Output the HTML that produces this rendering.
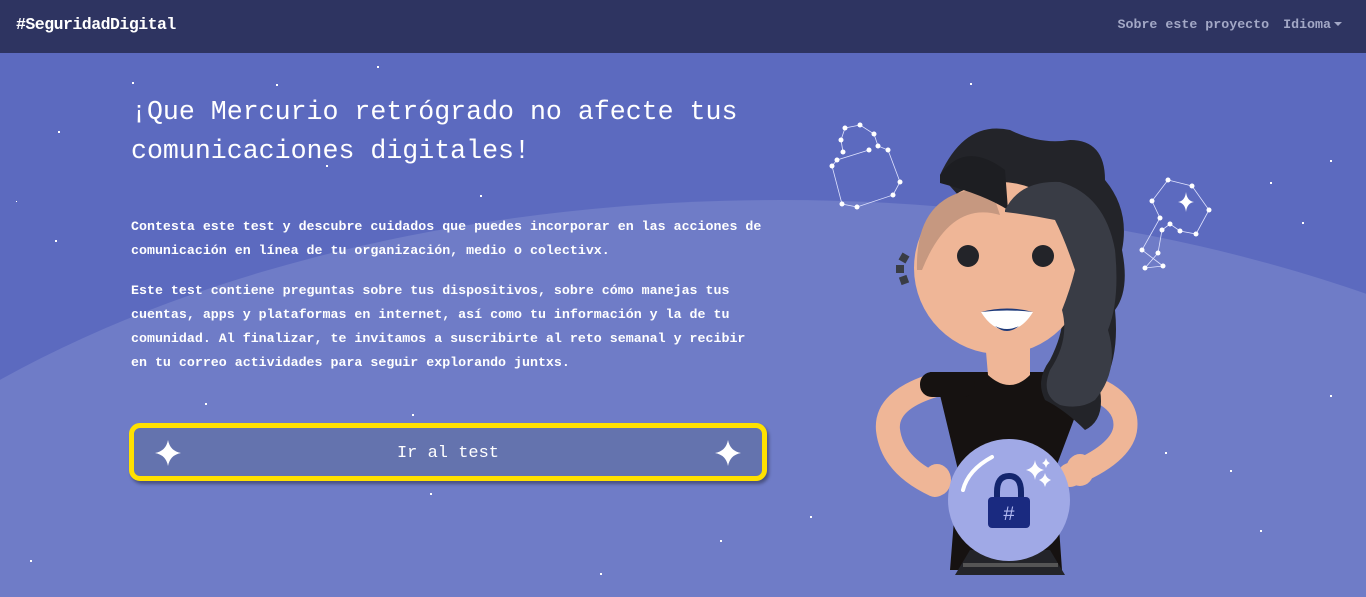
<!DOCTYPE html>
<html><head><meta charset="utf-8"><style>
*{margin:0;padding:0;box-sizing:border-box}
html{width:1366px;height:597px;overflow:hidden}
body{width:1366px;height:597px;overflow:hidden;background:#5c6abf;font-family:"Liberation Mono",monospace;position:relative;color:#fff}
.bg{position:absolute;left:0;top:0;width:1366px;height:597px;overflow:hidden}
.arc{position:absolute;left:-320px;top:200px;width:2200px;height:1220px;border-radius:50%;background:#6f7cc7}
nav{position:absolute;left:0;top:0;width:1366px;height:53px;background:#2e3461;z-index:2}
.brand{position:absolute;left:16px;top:15px;font-size:16.5px;font-weight:bold;letter-spacing:-0.5px}
.links{position:absolute;right:24px;top:17px;font-size:13.3px;color:#a3a8c6;font-weight:bold}
.links span{margin-left:14px}
.car{display:inline-block;border-left:4px solid transparent;border-right:4px solid transparent;border-top:4px solid #a3a8c6;vertical-align:middle;margin-left:3px}
h1{position:absolute;left:131px;top:93px;font-size:26.6px;font-weight:normal;line-height:39px;z-index:1}
.p{position:absolute;left:131px;font-size:13.3px;font-weight:bold;line-height:24px;z-index:1}
.btn{position:absolute;left:129px;top:423px;width:638px;height:58px;border:5px solid #ffe100;border-radius:11px;background:#6473ae;box-shadow:2px 3px 3px rgba(0,0,0,.35);z-index:1;text-align:center;font-size:17px;line-height:52px}
.btn svg{position:absolute;top:12px}
.s{position:absolute;background:#fff;z-index:1}
</style></head><body>
<div class="bg"><div class="arc"></div></div>
<nav><div class="brand">#SeguridadDigital</div><div class="links"><span>Sobre este proyecto</span><span>Idioma<i class="car"></i></span></div></nav>
<h1>¡Que Mercurio retrógrado no afecte tus<br>comunicaciones digitales!</h1>
<div class="p" style="top:215px">Contesta este test y descubre cuidados que puedes incorporar en las acciones de<br>comunicación en línea de tu organización, medio o colectivx.</div>
<div class="p" style="top:279px">Este test contiene preguntas sobre tus dispositivos, sobre cómo manejas tus<br>cuentas, apps y plataformas en internet, así como tu información y la de tu<br>comunidad. Al finalizar, te invitamos a suscribirte al reto semanal y recibir<br>en tu correo actividades para seguir explorando juntxs.</div>
<div class="btn">Ir al test
<svg style="left:21px" width="26" height="26" viewBox="0 0 26 26"><path d="M13 0Q15 11 26 13Q15 15 13 26Q11 15 0 13Q11 11 13 0Z" fill="#fff"/></svg>
<svg style="right:21px" width="26" height="26" viewBox="0 0 26 26"><path d="M13 0Q15 11 26 13Q15 15 13 26Q11 15 0 13Q11 11 13 0Z" fill="#fff"/></svg>
</div>
<div class="s" style="left:132px;top:82px;width:2px;height:2px"></div>
<div class="s" style="left:58px;top:131px;width:2px;height:2px"></div>
<div class="s" style="left:377px;top:66px;width:2px;height:2px"></div>
<div class="s" style="left:276px;top:84px;width:2px;height:2px"></div>
<div class="s" style="left:55px;top:240px;width:2px;height:2px"></div>
<div class="s" style="left:326px;top:165px;width:2px;height:2px"></div>
<div class="s" style="left:16px;top:201px;width:1px;height:1px"></div>
<div class="s" style="left:205px;top:403px;width:2px;height:2px"></div>
<div class="s" style="left:412px;top:414px;width:2px;height:2px"></div>
<div class="s" style="left:430px;top:493px;width:2px;height:2px"></div>
<div class="s" style="left:600px;top:573px;width:2px;height:2px"></div>
<div class="s" style="left:810px;top:516px;width:2px;height:2px"></div>
<div class="s" style="left:1270px;top:182px;width:2px;height:2px"></div>
<div class="s" style="left:1302px;top:222px;width:2px;height:2px"></div>
<div class="s" style="left:1330px;top:160px;width:2px;height:2px"></div>
<div class="s" style="left:1230px;top:470px;width:2px;height:2px"></div>
<div class="s" style="left:1260px;top:530px;width:2px;height:2px"></div>
<div class="s" style="left:1165px;top:452px;width:2px;height:2px"></div>
<div class="s" style="left:1330px;top:395px;width:2px;height:2px"></div>
<div class="s" style="left:30px;top:560px;width:2px;height:2px"></div>
<div class="s" style="left:720px;top:540px;width:2px;height:2px"></div>
<div class="s" style="left:480px;top:195px;width:2px;height:2px"></div>
<div class="s" style="left:970px;top:83px;width:2px;height:2px"></div>
<svg style="position:absolute;left:800px;top:100px;z-index:1" width="450" height="490" viewBox="0 0 450 490">
<g stroke="#dfe3ff" stroke-width="0.8" fill="none">
<polyline points="45,28 60,25 74,34 78,46 88,50 100,82 93,95 57,107 42,104 32,66 37,60 69,50"/>
<polyline points="45,28 41,40 43,52"/>
<polyline points="368,80 392,86 409,110 396,134 380,131 370,124 362,130 358,153 345,168 363,166 342,150 360,118 352,101 368,80"/>
</g>
<g fill="#fff">
<circle cx="45" cy="28" r="2.5"/><circle cx="60" cy="25" r="2.5"/><circle cx="74" cy="34" r="2.5"/><circle cx="78" cy="46" r="2.5"/><circle cx="88" cy="50" r="2.5"/><circle cx="100" cy="82" r="2.5"/><circle cx="93" cy="95" r="2.5"/><circle cx="57" cy="107" r="2.5"/><circle cx="42" cy="104" r="2.5"/><circle cx="32" cy="66" r="2.5"/><circle cx="37" cy="60" r="2.5"/><circle cx="69" cy="50" r="2.5"/><circle cx="41" cy="40" r="2.5"/><circle cx="43" cy="52" r="2.5"/>
<circle cx="368" cy="80" r="2.5"/><circle cx="392" cy="86" r="2.5"/><circle cx="409" cy="110" r="2.5"/><circle cx="396" cy="134" r="2.5"/><circle cx="380" cy="131" r="2.5"/><circle cx="370" cy="124" r="2.5"/><circle cx="362" cy="130" r="2.5"/><circle cx="358" cy="153" r="2.5"/><circle cx="345" cy="168" r="2.5"/><circle cx="363" cy="166" r="2.5"/><circle cx="342" cy="150" r="2.5"/><circle cx="360" cy="118" r="2.5"/><circle cx="352" cy="101" r="2.5"/>
<path d="M386 92Q387 101 394 102Q387 103 386 112Q385 103 378 102Q385 101 386 92Z"/>
</g>
<path d="M135 285Q85 300 88 330Q92 365 135 385" stroke="#efb697" stroke-width="24" fill="none" stroke-linecap="round"/>
<path d="M285 285Q330 300 325 330Q320 355 270 375" stroke="#efb697" stroke-width="24" fill="none" stroke-linecap="round"/>
<path d="M130 272L270 272L285 290L255 370L262 470L150 470L158 370L140 295Z" fill="#161211"/>
<rect x="120" y="272" width="55" height="25" rx="12" fill="#161211"/>
<path d="M185 240L230 240L230 275Q210 295 188 275Z" fill="#efb697"/>
<path d="M140 75Q165 20 210 30Q240 45 270 40Q305 40 305 80Q330 110 322 150Q330 190 315 210Q320 260 300 290Q305 320 285 330Q265 310 245 300Q235 280 250 260Q265 230 262 210Z" fill="#232429"/>
<circle cx="200" cy="168" r="86" fill="#efb697"/>
<path d="M117 170Q115 100 170 90L190 85L200 115Q150 100 122 170Z" fill="#c69880"/>
<path d="M140 75Q165 40 205 70L208 110Q185 95 140 83Z" fill="#1d1e22"/>
<path d="M205 110Q220 80 260 82Q305 95 315 150Q320 200 308 230Q320 270 295 300Q280 310 260 305Q240 295 250 270Q270 240 262 210Q270 190 275 170Q265 140 255 120Q230 115 205 112Z" fill="#393c45"/>
<rect x="100" y="154" width="8" height="8" fill="#393c45" transform="rotate(30 104 158)"/>
<rect x="96" y="165" width="8" height="8" fill="#393c45"/>
<rect x="100" y="176" width="8" height="8" fill="#393c45" transform="rotate(-20 104 180)"/>
<circle cx="168" cy="156" r="11" fill="#232429"/><circle cx="243" cy="156" r="11" fill="#232429"/>
<path d="M181 212Q207 207 233 212Q222 230 207 230Q192 230 181 212Z" fill="#fff"/>
<path d="M181 212Q207 205 233 212Q207 209 181 212Z" fill="#1e3a7a"/>
<path d="M195 226Q207 232 219 226Q207 236 195 226Z" fill="#1e3a7a"/>
<ellipse cx="137" cy="380" rx="14" ry="16" fill="#efb697"/>
<ellipse cx="280" cy="370" rx="14" ry="16" fill="#efb697"/>
<path d="M170 450L250 450L265 475L155 475Z" fill="#232429"/>
<rect x="163" y="463" width="95" height="4" fill="#555"/>
<circle cx="209" cy="400" r="61" fill="#a0a9e6"/>
<path d="M163 390Q168 370 192 357" stroke="#fff" stroke-width="4" fill="none" stroke-linecap="round"/>
<path d="M197 398V392Q197 376 209 376Q221 376 221 392V398" stroke="#14266e" stroke-width="6" fill="none"/>
<rect x="188" y="397" width="42" height="31" rx="4" fill="#1a2a80"/>
<text x="209" y="420" font-family="Liberation Mono" font-size="20" fill="#b0b8f0" text-anchor="middle">#</text>
<path d="M235 360Q236 368 244 370Q236 372 235 380Q234 372 226 370Q234 368 235 360Z" fill="#fff"/>
<path d="M245 373Q246 378 251 380Q246 382 245 387Q244 382 239 380Q244 378 245 373Z" fill="#fff"/>
<path d="M246 358Q247 362 250 363Q247 364 246 368Q245 364 242 363Q245 362 246 358Z" fill="#fff"/>
</svg>
</body></html>
